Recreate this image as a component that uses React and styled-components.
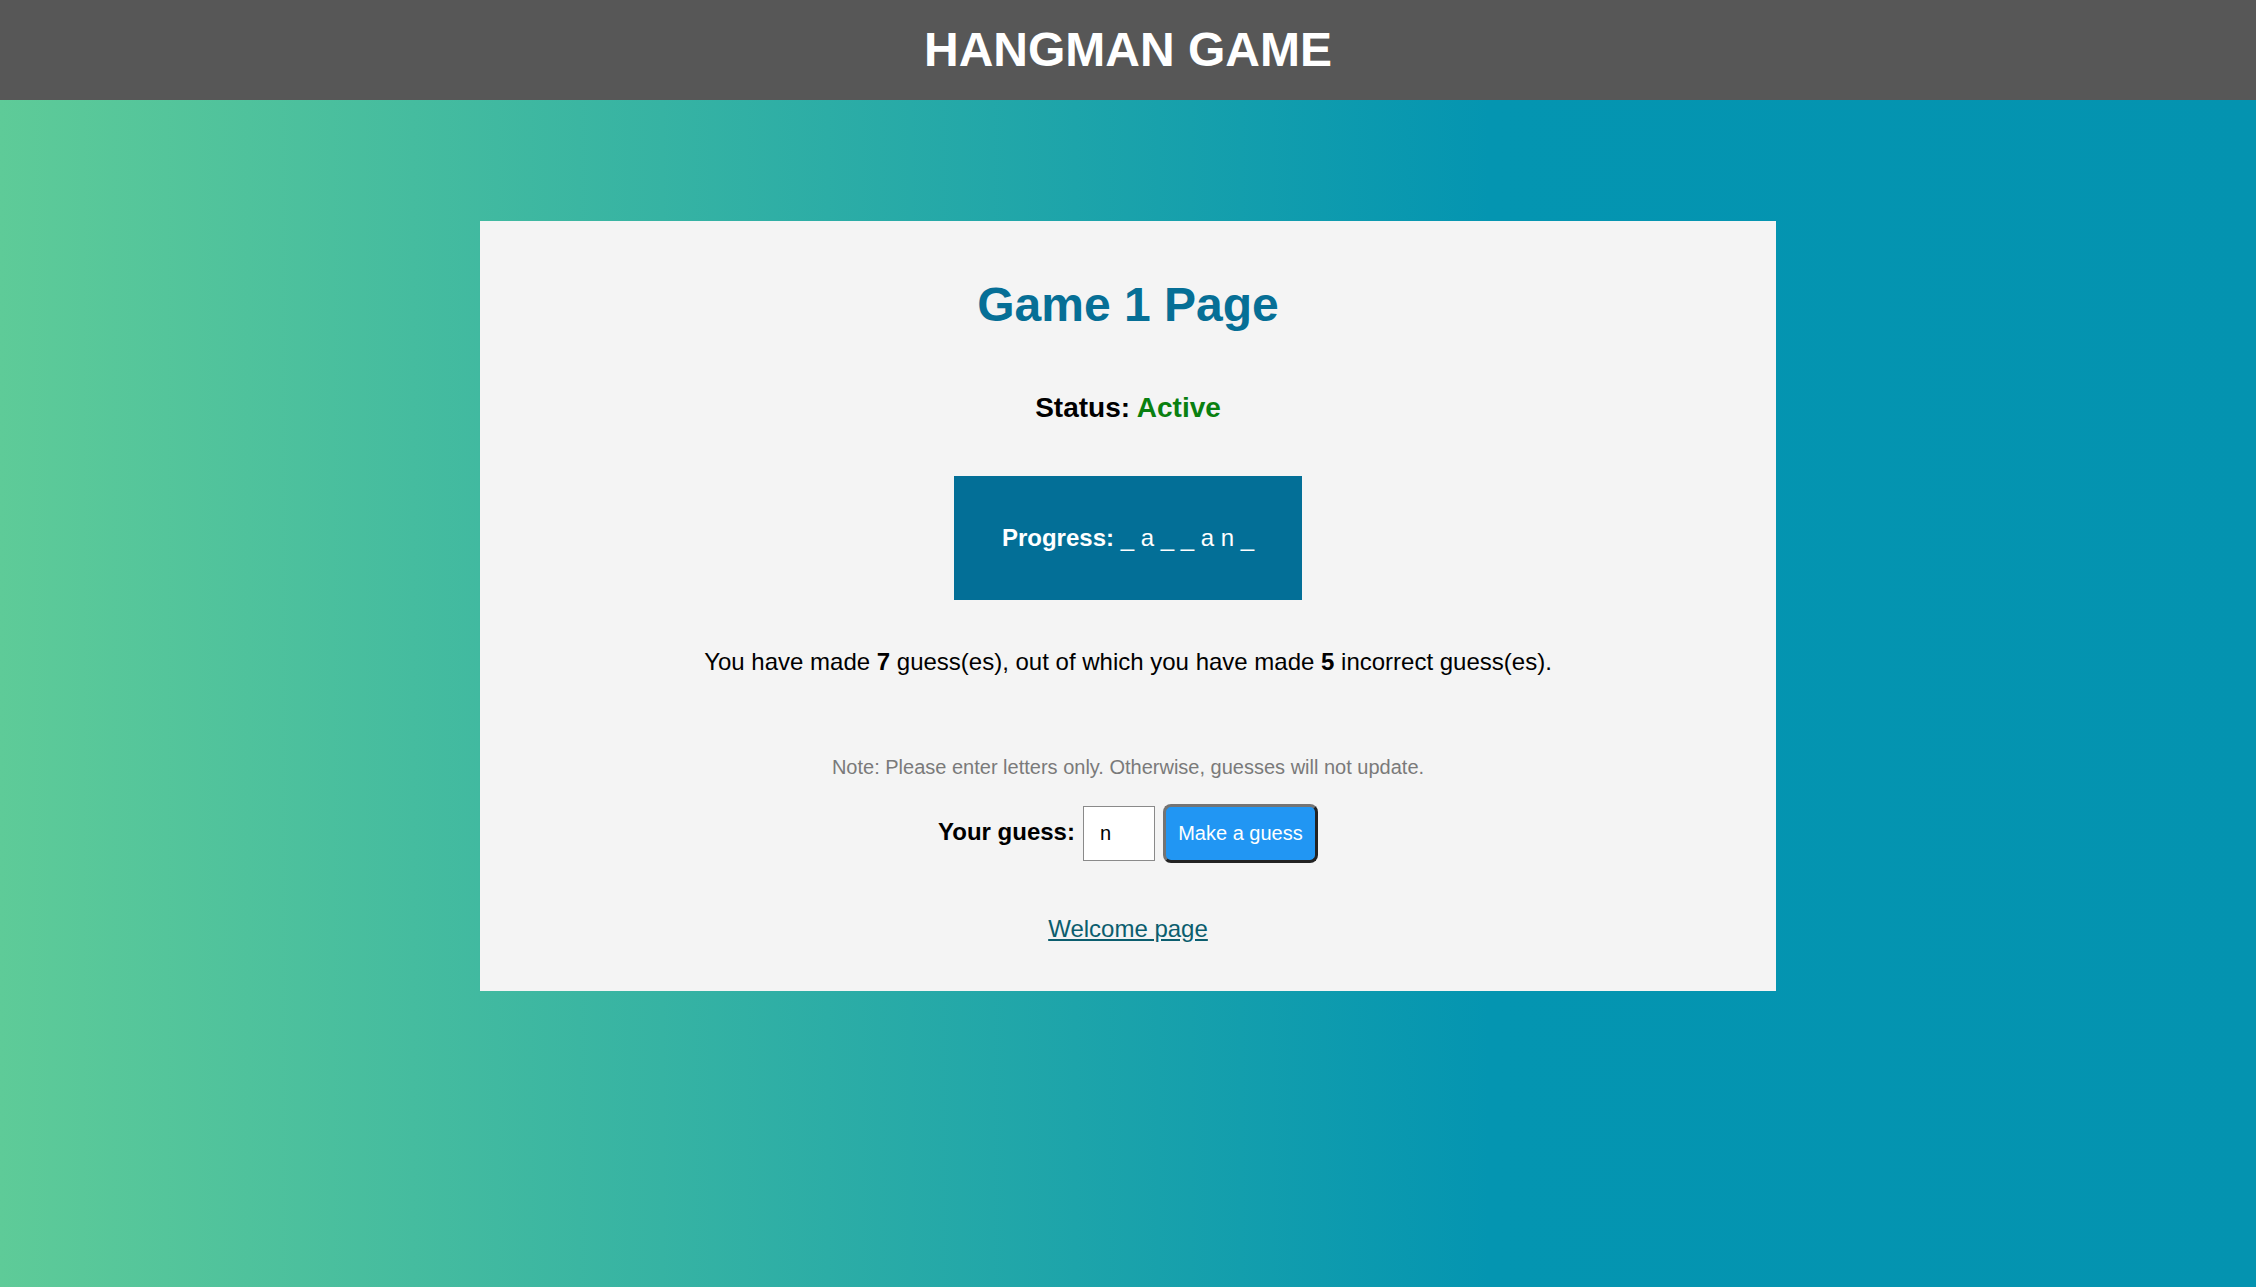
import React from "react";
import styled, { createGlobalStyle } from "styled-components";

const GlobalStyle = createGlobalStyle`
  html, body {
    margin: 0;
    padding: 0;
  }
  body {
    font-family: "Liberation Sans", Arial, sans-serif;
    min-height: 1287px;
    background: linear-gradient(90deg, #5ecb98 0%, #0495b1 66%, #0493b0 100%);
  }
`;

const Header = styled.header`
  height: 100px;
  background: #575757;
  display: flex;
  align-items: center;
  justify-content: center;
`;

const SiteTitle = styled.h1`
  margin: 0;
  color: #ffffff;
  font-size: 48px;
  font-weight: 700;
  line-height: 100px;
`;

const Main = styled.main`
  display: flex;
  justify-content: center;
  padding-top: 121px;
`;

const Card = styled.section`
  width: 1296px;
  box-sizing: border-box;
  background: #f4f4f4;
  padding: 56px 48px 48px;
  display: flex;
  flex-direction: column;
  align-items: center;
  text-align: center;
`;

const PageTitle = styled.h2`
  margin: 0;
  color: #066f96;
  font-size: 48px;
  font-weight: 700;
  line-height: 55px;
`;

const Status = styled.h3`
  margin: 60px 0 0;
  font-size: 28px;
  font-weight: 700;
  line-height: 32px;
  color: #000;
`;

const StatusValue = styled.span`
  color: ${(p) => (p.$active ? "#0a8010" : "#c62828")};
`;

const ProgressBox = styled.div`
  margin-top: 52px;
  background: #036f97;
  color: #ffffff;
  padding: 48px 48px;
  font-size: 24px;
  line-height: 28px;
`;

const Strong = styled.strong`
  font-weight: 700;
`;

const Summary = styled.p`
  margin: 48px 0 0;
  font-size: 24px;
  line-height: 28px;
  color: #000;
`;

const Note = styled.p`
  margin: 80px 0 0;
  font-size: 20px;
  line-height: 23px;
  color: #7a7a7a;
`;

const GuessRow = styled.form`
  margin-top: 25px;
  display: flex;
  align-items: baseline;
  gap: 8px;
`;

const Label = styled.label`
  font-size: 24px;
  font-weight: 700;
  color: #000;
`;

const Input = styled.input`
  width: 72px;
  height: 55px;
  box-sizing: border-box;
  border: 1px solid #8a8a8a;
  border-radius: 0;
  background: #fff;
  padding: 0 0 0 16px;
  font-family: "Liberation Sans", Arial, sans-serif;
  font-size: 20px;
  color: #000;
  outline: none;
`;

const Button = styled.button`
  width: 155px;
  height: 59px;
  box-sizing: border-box;
  background: #2196f3;
  color: #fff;
  border: 3px solid;
  border-color: #747474 #232323 #232323 #747474;
  border-radius: 8px;
  font-family: "Liberation Sans", Arial, sans-serif;
  font-size: 20px;
  padding: 0;
  cursor: pointer;
`;

const WelcomeLink = styled.a`
  margin-top: 52px;
  font-size: 24px;
  line-height: 28px;
  color: #0b5d6e;
  text-decoration: underline;
`;

export default function App() {
  return (
    <>
      <GlobalStyle />
      <Header>
        <SiteTitle>HANGMAN GAME</SiteTitle>
      </Header>
      <Main>
        <Card>
          <PageTitle>Game 1 Page</PageTitle>
          <Status>
            Status: <StatusValue $active>Active</StatusValue>
          </Status>
          <ProgressBox>
            <Strong>Progress:</Strong> _ a _ _ a n _
          </ProgressBox>
          <Summary>
            You have made <Strong>7</Strong> guess(es), out of which you have
            made <Strong>5</Strong> incorrect guess(es).
          </Summary>
          <Note>
            Note: Please enter letters only. Otherwise, guesses will not update.
          </Note>
          <GuessRow onSubmit={(e) => e.preventDefault()}>
            <Label htmlFor="guess">Your guess:</Label>
            <Input id="guess" type="text" defaultValue="n" maxLength={1} />
            <Button type="submit">Make a guess</Button>
          </GuessRow>
          <WelcomeLink href="#">Welcome page</WelcomeLink>
        </Card>
      </Main>
    </>
  );
}
